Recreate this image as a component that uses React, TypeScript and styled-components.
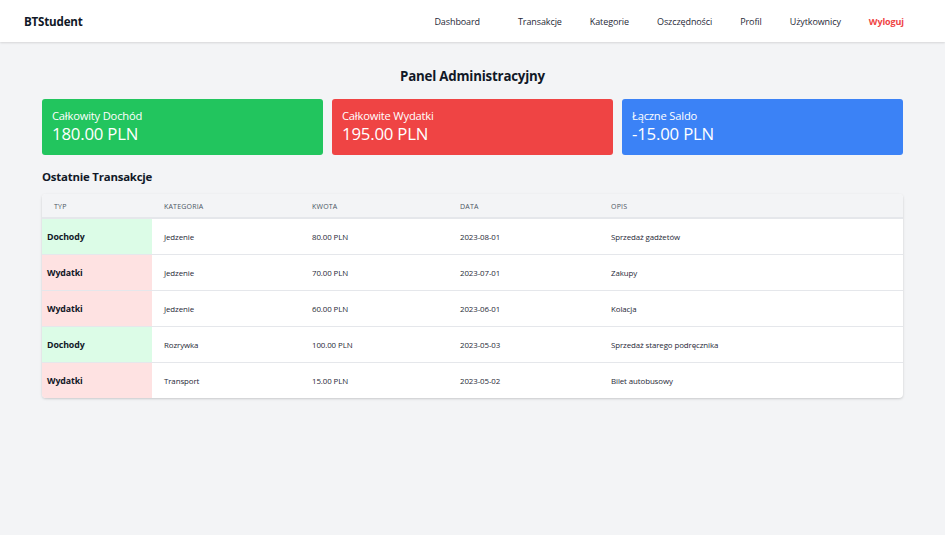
import React from "react";
import styled, { createGlobalStyle } from "styled-components";

const Global = createGlobalStyle`
  html, body { margin: 0; padding: 0; }
  body {
    background: #f3f4f6;
    font-family: "Open Sans", "Noto Sans", "Liberation Sans", sans-serif;
    color: #111827;
    width: 945px;
    min-height: 535px;
  }
`;

const Page = styled.div`
  min-height: 535px;
  background: #f3f4f6;
`;

const Nav = styled.nav`
  height: 42px;
  background: #ffffff;
  box-shadow: 0 1px 2px rgba(0, 0, 0, 0.12);
  display: flex;
  align-items: center;
  justify-content: space-between;
  padding: 0 41px 0 24px;
`;

const Brand = styled.div`
  font-weight: 700;
  font-size: 11.6px;
  color: #111827;
  letter-spacing: -0.2px;
`;

const Links = styled.div`
  display: flex;
  align-items: center;
  gap: 28px;
`;

const NavLink = styled.a<{ $danger?: boolean; $extra?: number }>`
  font-size: 9px;
  color: ${(p) => (p.$danger ? "#ef4444" : "#1f2937")};
  font-weight: ${(p) => (p.$danger ? 700 : 400)};
  margin-right: ${(p) => p.$extra ?? 0}px;
  text-decoration: none;
  letter-spacing: -0.1px;
`;

const Main = styled.main`
  padding: 24px 42px 0 42px;
  display: flex;
  flex-direction: column;
`;

const Title = styled.h1`
  margin: 0 0 13px 0;
  text-align: center;
  font-size: 13.3px;
  font-weight: 700;
  line-height: 20px;
  color: #111827;
  letter-spacing: -0.2px;
`;

const Cards = styled.div`
  display: grid;
  grid-template-columns: repeat(3, 1fr);
  gap: 9px;
`;

const Card = styled.div<{ $bg: string }>`
  background: ${(p) => p.$bg};
  color: #ffffff;
  border-radius: 3px;
  height: 56px;
  box-sizing: border-box;
  padding: 9px 10px 0 10px;
  display: flex;
  flex-direction: column;
`;

const CardLabel = styled.div`
  font-size: 11.2px;
  line-height: 15px;
  letter-spacing: -0.2px;
`;

const CardValue = styled.div`
  font-size: 16.8px;
  line-height: 22px;
  letter-spacing: -0.2px;
`;

const SectionTitle = styled.h2`
  margin: 13px 0 8px 0;
  font-size: 11.4px;
  font-weight: 700;
  line-height: 18px;
  color: #111827;
  letter-spacing: -0.2px;
`;

const TableWrap = styled.div`
  border-radius: 4px;
  overflow: hidden;
  background: #ffffff;
  box-shadow: 0 1px 3px rgba(0, 0, 0, 0.12), 0 1px 2px rgba(0, 0, 0, 0.06);
`;

const Table = styled.table`
  width: 100%;
  border-collapse: collapse;
  table-layout: fixed;
`;

const Th = styled.th<{ $w?: number; $pl?: number }>`
  box-sizing: border-box;
  width: ${(p) => (p.$w ? `${p.$w}px` : "auto")};
  background: #f3f4f6;
  text-align: left;
  font-size: 7px;
  font-weight: 400;
  color: #4b5563;
  text-transform: uppercase;
  letter-spacing: 0.2px;
  height: 24px;
  padding: 1px 0 0 ${(p) => p.$pl ?? 12}px;
  border-bottom: 2px solid #e5e7eb;
`;

const Tr = styled.tr`
  border-bottom: 1px solid #e5e7eb;
  &:last-child { border-bottom: none; }
`;

const TypeCell = styled.td<{ $income: boolean }>`
  background: ${(p) => (p.$income ? "#dcfce7" : "#fee2e2")};
  font-weight: 700;
  font-size: 8.8px;
  color: #111827;
  height: 35px;
  padding: 0 0 0 5px;
  letter-spacing: -0.1px;
`;

const Td = styled.td`
  font-size: 7.9px;
  color: #1f2937;
  padding: 0 0 0 12px;
  height: 35px;
  letter-spacing: -0.1px;
`;

type Tx = { income: boolean; cat: string; amount: string; date: string; desc: string };

const txs: Tx[] = [
  { income: true, cat: "Jedzenie", amount: "80.00 PLN", date: "2023-08-01", desc: "Sprzedaż gadżetów" },
  { income: false, cat: "Jedzenie", amount: "70.00 PLN", date: "2023-07-01", desc: "Zakupy" },
  { income: false, cat: "Jedzenie", amount: "60.00 PLN", date: "2023-06-01", desc: "Kolacja" },
  { income: true, cat: "Rozrywka", amount: "100.00 PLN", date: "2023-05-03", desc: "Sprzedaż starego podręcznika" },
  { income: false, cat: "Transport", amount: "15.00 PLN", date: "2023-05-02", desc: "Bilet autobusowy" },
];

export default function App() {
  return (
    <Page>
      <Global />
      <Nav>
        <Brand>BTStudent</Brand>
        <Links>
          <NavLink $extra={10}>Dashboard</NavLink>
          <NavLink>Transakcje</NavLink>
          <NavLink>Kategorie</NavLink>
          <NavLink>Oszczędności</NavLink>
          <NavLink>Profil</NavLink>
          <NavLink>Użytkownicy</NavLink>
          <NavLink $danger>Wyloguj</NavLink>
        </Links>
      </Nav>
      <Main>
        <Title>Panel Administracyjny</Title>
        <Cards>
          <Card $bg="#22c55e">
            <CardLabel>Całkowity Dochód</CardLabel>
            <CardValue>180.00 PLN</CardValue>
          </Card>
          <Card $bg="#ef4444">
            <CardLabel>Całkowite Wydatki</CardLabel>
            <CardValue>195.00 PLN</CardValue>
          </Card>
          <Card $bg="#3b82f6">
            <CardLabel>Łączne Saldo</CardLabel>
            <CardValue>-15.00 PLN</CardValue>
          </Card>
        </Cards>
        <SectionTitle>Ostatnie Transakcje</SectionTitle>
        <TableWrap>
          <Table>
            <thead>
              <tr>
                <Th $w={110}>Typ</Th>
                <Th $w={148}>Kategoria</Th>
                <Th $w={148}>Kwota</Th>
                <Th $w={151}>Data</Th>
                <Th>Opis</Th>
              </tr>
            </thead>
            <tbody>
              {txs.map((t, i) => (
                <Tr key={i}>
                  <TypeCell $income={t.income}>{t.income ? "Dochody" : "Wydatki"}</TypeCell>
                  <Td>{t.cat}</Td>
                  <Td>{t.amount}</Td>
                  <Td>{t.date}</Td>
                  <Td>{t.desc}</Td>
                </Tr>
              ))}
            </tbody>
          </Table>
        </TableWrap>
      </Main>
    </Page>
  );
}
